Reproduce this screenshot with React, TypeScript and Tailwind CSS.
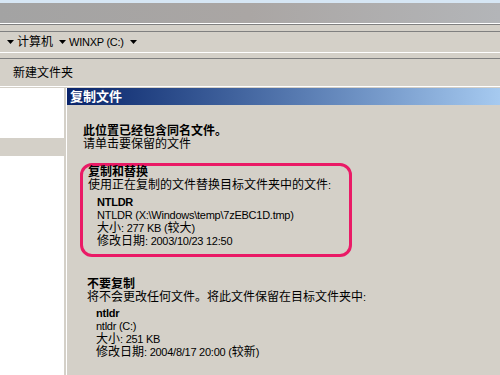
import React from "react";

const font = { fontFamily: '"Liberation Sans", "Noto Sans CJK SC", sans-serif' };

// Latin runs are set a touch smaller than the CJK, like the old Tahoma/SimSun pairing
const T = ({ children }: { children: string }) => (
  <>
    {children.split(/([\x00-\x7F]+)/).map((part, i) =>
      /[\x00-\x7F]/.test(part) ? (
        <span key={i} className="text-[11px] tracking-[-0.25px]">
          {part}
        </span>
      ) : (
        <React.Fragment key={i}>{part}</React.Fragment>
      )
    )}
  </>
);

const Caret = () => (
  <svg width="7" height="4" viewBox="0 0 7 4" className="shrink-0">
    <path d="M0 0h7L3.5 4z" fill="#000" />
  </svg>
);

const FileInfo = ({ name, path, size, date }: { name: string; path: string; size: string; date: string }) => (
  <div className="pl-[9px]">
    <div className="font-bold"><T>{name}</T></div>
    <div><T>{path}</T></div>
    <div><T>{size}</T></div>
    <div><T>{date}</T></div>
  </div>
);

export default function App() {
  return (
    <div
      className="w-[500px] h-[375px] overflow-hidden flex flex-col bg-[#d4d0c8] text-[12px] leading-[13px] text-black"
      style={font}
    >
      {/* window top */}
      <div className="h-[3px] bg-[#d6e6f4]" />
      <div className="h-[20px] bg-gradient-to-r from-[#a3a3a3] via-[#aaa6a4] to-[#b3b5b8]" />
      <div className="h-px bg-white" />
      <div className="h-px bg-[#808080]" />
      <div className="h-[6px]" />
      <div className="h-px bg-[#808080]" />

      {/* address bar */}
      <div className="h-[20px] flex items-center pl-[7px]">
        <Caret />
        <span className="ml-[3px]">计算机</span>
        <span className="ml-[6px]"><Caret /></span>
        <span className="ml-[3px]"><T>WINXP (C:)</T></span>
        <span className="ml-[6px]"><Caret /></span>
      </div>
      <div className="h-px bg-white" />
      <div className="h-[5px]" />
      <div className="h-px bg-[#808080]" />

      {/* toolbar */}
      <div className="h-[27px] flex items-center pl-[13px] pt-[2px]">新建文件夹</div>
      <div className="h-px bg-white" />

      {/* content */}
      <div className="flex-1 flex min-h-0 pt-px">
        <div className="w-[64px] flex flex-col">
          <div className="h-[50px] bg-white" />
          <div className="h-[18px]" />
          <div className="flex-1 bg-white" />
        </div>
        <div className="w-[2px]" />
        <div className="w-px bg-white" />

        {/* dialog */}
        <div className="flex-1 flex flex-col">
          <div className="h-[17px] flex items-center pl-[3px] bg-gradient-to-r from-[#0a246a] to-[#a6caf0] text-white font-bold text-[13px]">
            复制文件
          </div>
          <div className="pt-[20px] pl-[13px]">
            <div className="pl-[3px]">
              <div className="font-bold">此位置已经包含同名文件。</div>
              <div>请单击要保留的文件</div>
            </div>

            <div className="mt-[12px] w-[272px] h-[94px] border-[3px] border-[#ea1a66] rounded-[12px] pl-[5px]">
              <div className="font-bold">复制和替换</div>
              <div><T>使用正在复制的文件替换目标文件夹中的文件:</T></div>
              <div className="mt-[4px]">
                <FileInfo
                  name="NTLDR"
                  path="NTLDR (X:\Windows\temp\7zEBC1D.tmp)"
                  size="大小: 277 KB (较大)"
                  date="修改日期: 2003/10/23 12:50"
                />
              </div>
            </div>

            <div className="mt-[21px] pl-[7px]">
              <div className="font-bold">不要复制</div>
              <div><T>将不会更改任何文件。将此文件保留在目标文件夹中:</T></div>
              <div className="mt-[3px]">
                <FileInfo
                  name="ntldr"
                  path="ntldr (C:)"
                  size="大小: 251 KB"
                  date="修改日期: 2004/8/17 20:00 (较新)"
                />
              </div>
            </div>
          </div>
        </div>
      </div>
    </div>
  );
}
